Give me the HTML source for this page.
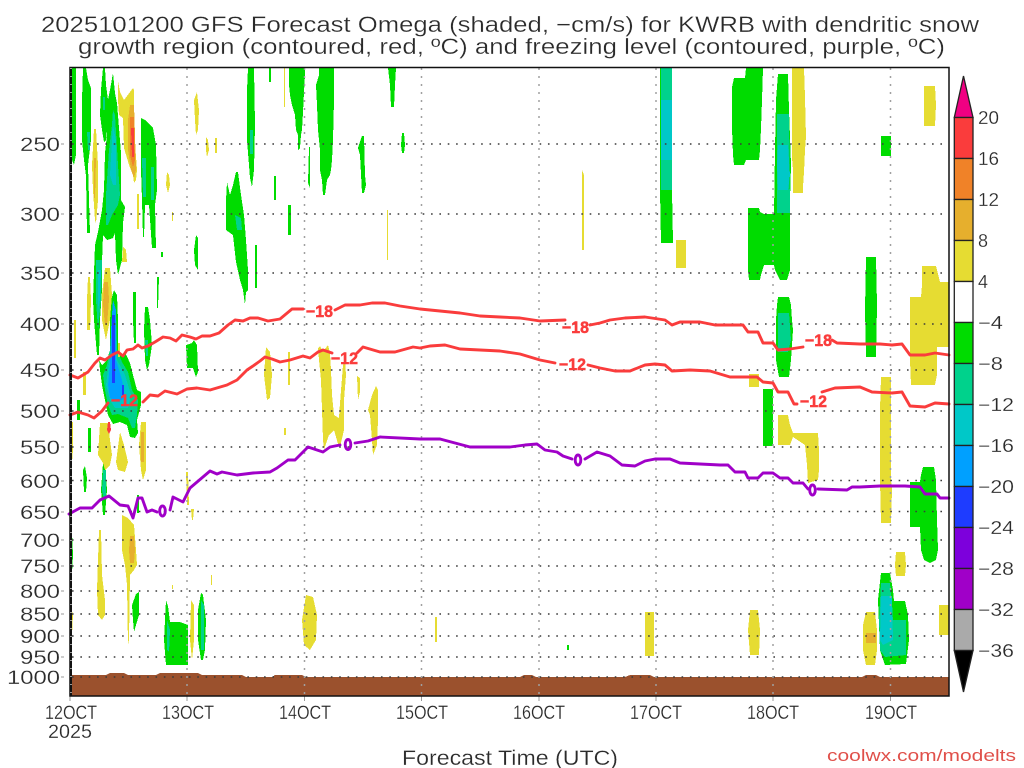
<!DOCTYPE html>
<html><head><meta charset="utf-8"><title>GFS Forecast Omega</title>
<style>html,body{margin:0;padding:0;background:#fff}svg{display:block}text{font-family:"Liberation Sans",sans-serif}</style></head>
<body>
<svg width="1024" height="768" viewBox="0 0 1024 768" xmlns="http://www.w3.org/2000/svg">
<rect width="1024" height="768" fill="#fff"/>
<g fill="#2a2a2a" stroke="#fff" stroke-width=".25">
<text x="41" y="32" font-size="22" textLength="938" lengthAdjust="spacingAndGlyphs">2025101200 GFS Forecast Omega (shaded, −cm/s) for KWRB with dendritic snow</text>
<text x="78" y="54" font-size="22" textLength="867" lengthAdjust="spacingAndGlyphs">growth region (contoured, red, ºC) and freezing level (contoured, purple, ºC)</text>
</g>
<g shape-rendering="crispEdges">
<polygon fill="#9b512d" points="70,675 106,675 110,673 124,673 128,675 156,675 160,673 198,673 202,675 242,675 246,677 272,677 275,675 302,675 306,677 520,677 524,675 532,675 536,677 625,677 630,675 650,675 654,677 862,677 866,675 876,675 880,677 949,677 949,696 70,696"/>
<g fill="#00dc00">
<polygon points="71,68 76,68 76,155 74,165 72,160 71,150"/>
<polygon points="83,68 86,68 88,80 91,88 91,140 88,165 90,233 87,233 86,176 84,160 82,140 82,100"/>
<polygon points="103,68 105,68 106,85 108,100 108,120 106,140 104,142 102,130 100,115 101,90"/>
<polygon points="113,73 115,93 117,103 121,153 121,200 125,207 123,223 122,260 118,275 116,260 115,233 113,238 107,240 103,235 102,262 102,290 100,320 99,355 97,355 94,320 93,300 95,245 98,232 102,210 104,190 105,153 107,135 108,100 110,90"/>
<polygon points="114,290 117,295 118,320 118,352 122,355 125,352 130,363 133,375 137,390 141,392 141,405 137,420 138,433 135,438 130,437 127,425 120,422 113,424 108,415 105,400 102,385 100,370 99,360 102,365 107,360 110,350 110,320 111,300"/>
<polygon points="141,118 145,120 149,124 153,128 156,145 157,190 155,205 156,248 152,248 149,205 145,205 144,237 143,237 142,200 141,170"/>
<polygon points="145,307 148,307 150,320 152,345 149,365 147,370 145,360 144,330"/>
<polygon points="133,292 136,292 136,343 134,343 133,320"/>
<polygon points="157,277 159,277 158,308 157,308"/>
<polygon points="186,345 192,343 194,340 197,345 198,372 196,377 193,368 187,368"/>
<rect x="77" y="400" width="3" height="20"/><rect x="88" y="428" width="3" height="24"/>
<polygon points="83,470 85,466 87,478 86,492 84,492"/>
<polygon points="103,463 105,463 107,490 105,515 103,515 101,490"/>
<rect x="137" y="495" width="2" height="18"/>
<polygon points="70,532 72,532 73,555 72,573 70,573"/>
<polygon points="136,594 139,592 139,615 136,625 134,632 133,620 132,605"/>
<polygon points="166,600 168,606 170,622 180,622 188,625 188,665 166,665 164,640 165,620"/>
<polygon points="201,593 203,595 206,620 205,650 203,660 201,660 198,640 198,610"/>
<polygon points="227,182 230,195 233,185 236,172 238,172 241,195 244,215 246,240 248,270 248,290 246,292 245,305 243,290 240,280 236,262 233,235 226,230 226,200"/>
<polygon points="196,235 198,238 198,270 195,265 194,250"/>
<rect x="255" y="245" width="2" height="43"/><rect x="161" y="252" width="2" height="5"/>
<polygon points="248,68 254,68 255,125 254,170 252,187 250,178 247,140 247,90"/>
<rect x="269" y="68" width="2" height="14"/>
<rect x="274" y="176" width="2" height="24"/>
<polygon points="288,205 291,205 291,235 288,235"/>
<polygon points="289,68 305,68 305,75 304,92 303,112 302,130 301,135 300,148 298,150 298,135 296,130 295,115 292,105 290,95 289,85"/>
<polygon points="309,147 310,147 310,188 308,183"/>
<polygon points="319,68 334,68 334,100 333,140 332,160 331,170 330,175 327,180 325,195 323,195 322,180 320,170 320,150 318,130 317,105 316,85 319,75"/>
<polygon points="362,136 364,136 365,175 366,185 364,193 362,193 360,155 358,148"/>
<polygon points="402,133 404,133 405,145 404,153 402,153 401,145"/>
<polygon points="388,68 396,68 395,85 394,107 391,107 390,85"/>
<rect x="567" y="645" width="2" height="5"/>
<polygon points="660,68 672,68 672,190 673,243 661,243 660,190"/>
<polygon points="746,68 763,68 762,100 761,128 760,150 759,160 746,160 744,165 734,165 733,155 732,128 732,87 734,78 745,78"/>
<polygon points="778,74 788,74 789,110 791,165 790,200 790,264 790,270 787,280 780,280 775,270 774,265 764,265 761,275 760,280 749,280 748,270 748,208 759,208 760,212 764,214 774,214 775,150 776,100"/>
<polygon points="778,297 789,297 791,305 792,320 793,330 791,360 789,377 779,377 776,360 776,320 777,305"/>
<rect x="763" y="389" width="10" height="57"/>
<rect x="881" y="136" width="10" height="20"/>
<polygon points="866,257 876,257 877,305 876,357 866,357 865,310"/>
<polygon points="923,467 934,467 936,480 937,520 938,550 936,560 930,563 924,560 921,550 920,527 910,527 910,482 920,482 921,475"/>
<polygon points="881,573 890,573 893,590 894,601 905,601 908,615 909,640 906,664 885,665 880,650 878,600"/>
</g>
<g fill="#00d28c">
<polygon points="113,110 115,115 118,165 120,195 118,205 112,215 108,225 106,225 106,195 109,150 112,125"/>
<rect x="103" y="97" width="2" height="13"/>
<polygon points="87,132 90,132 90,150 88,150"/>
<polygon points="96,260 102,260 101,300 98,330 96,300"/>
<polygon points="113,305 116,310 117,350 122,362 128,372 132,390 138,400 137,415 135,428 132,428 128,418 118,414 112,415 108,405 105,390 103,375 107,365 110,350"/>
<polygon points="142,158 146,158 146,197 143,197"/><polygon points="151,167 154,167 154,200 151,200"/>
<polygon points="235,215 241,218 242,230 237,230"/>
<polygon points="145,340 148,340 148,356 146,356"/>
<polygon points="103,470 106,470 106,495 104,500 102,490"/>
<polygon points="167,620 170,630 169,652 167,650"/><polygon points="201,600 204,605 204,650 201,650"/>
<rect x="250" y="130" width="3" height="24"/>
<polygon points="661,68 672,68 672,190 661,190"/>
<polygon points="777,114 789,114 790,213 777,213"/>
<polygon points="778,313 789,313 791,340 788,352 778,352"/>
<polygon points="881,583 890,583 893,620 906,620 906,655 885,657 880,650 879,620"/>
</g>
<g fill="#00c8c8">
<polygon points="113,125 116,140 116,185 113,185 110,175 112,140"/>
<polygon points="98,270 101,270 100,300 98,310"/>
<polygon points="112,315 116,318 117,360 125,375 131,395 128,408 115,408 110,400 106,385 108,370 111,350"/>
<rect x="661" y="100" width="11" height="60"/>
<polygon points="778,145 788,145 790,175 788,190 778,190 777,165"/>
<polygon points="881,596 892,596 893,640 883,645 880,640"/>
</g>
<g fill="#00a0ff">
<polygon points="113,300 116,310 116,360 122,380 125,398 118,402 110,398 108,385 110,365 111,330"/>
</g>
<g fill="#1e3cff">
<rect x="112" y="315" width="3" height="68"/><rect x="122" y="385" width="2" height="10"/>
</g>
<g fill="#e6dc32">
<polygon points="118,81 120,92 124,100 133,88 134,90 134,130 137,170 136,180 134,183 133,175 129,165 124,148 123,118 119,115 118,100"/>
<polygon points="94,129 96,129 98,165 98,200 96,223 95,220 93,190 92,165"/>
<polygon points="194,100 197,92 199,110 198,130 196,135 195,120"/>
<polygon points="206,137 208,140 209,150 207,157 206,150"/><rect x="215" y="138" width="2" height="15"/>
<polygon points="167,172 169,175 170,185 168,193 166,185"/>
<rect x="137" y="194" width="2" height="35"/><rect x="172" y="212" width="1" height="9"/>
<polygon points="123,247 126,250 127,262 122,262"/>
<polygon points="105,268 110,268 112,295 110,320 106,340 102,320 102,295"/>
<polygon points="88,277 90,277 91,300 90,330 87,330 87,300"/>
<rect x="74" y="320" width="2" height="38"/><rect x="83" y="372" width="3" height="23"/>
<rect x="118" y="343" width="2" height="14"/>
<polygon points="70,422 73,422 73,450 72,462 70,462"/>
<polygon points="100,423 108,423 110,440 112,455 110,465 105,470 103,463 98,455"/>
<polygon points="120,432 124,445 128,462 125,472 118,470 116,462"/>
<polygon points="141,422 146,422 146,470 143,480 141,470 139,445"/>
<polygon points="186,472 188,472 189,505 187,505"/>
<polygon points="191,509 194,509 193,520 192,520"/>
<polygon points="122,515 128,518 134,525 136,550 137,565 134,570 130,575 129,640 128,645 127,585 125,565 122,550"/>
<polygon points="99,530 101,530 102,575 105,600 105,615 102,620 98,615 97,590 98,560"/>
<polygon points="70,602 73,615 72,635 70,635"/>
<rect x="172" y="585" width="1" height="4"/><rect x="211" y="575" width="1" height="10"/>
<polygon points="191,600 194,605 194,640 192,660 190,640"/>
<polygon points="284,68 285,68 285,107 284,107"/>
<polygon points="306,595 313,597 317,615 316,640 310,650 304,645 302,620"/>
<polygon points="318,348 320,346 322,350 325,349 328,345 330,353 331,370 332,395 334,415 339,418 340,403 343,365 345,360 346,375 344,400 344,430 340,447 338,444 334,430 329,435 325,447 324,450 323,440 322,410 321,380 319,360"/>
<rect x="288" y="352" width="2" height="33"/><rect x="284" y="428" width="2" height="7"/>
<polygon points="357,376 360,378 360,392 358,400"/>
<polygon points="376,386 378,390 378,420 377,445 373,455 372,440 370,415 368,410 372,395"/>
<polygon points="266,347 270,352 272,375 270,398 267,400 264,375"/>
<rect x="435" y="617" width="2" height="25"/>
<rect x="387" y="210" width="1" height="50"/>
<polygon points="582,170 584,175 584,250 582,250"/>
<rect x="676" y="240" width="10" height="28"/>
<rect x="645" y="612" width="9" height="44"/>
<polygon points="750,610 758,610 760,630 759,655 750,655 748,630"/>
<polygon points="792,68 804,68 805,97 806,137 805,150 804,172 803,187 803,193 793,193 793,170 792,158"/>
<rect x="749" y="374" width="10" height="13"/>
<polygon points="778,415 788,415 790,425 793,433 805,433 818,433 819,450 819,470 818,480 808,483 807,465 805,445 793,437 790,445 787,445 778,445"/>
<polygon points="924,86 935,86 936,105 935,126 924,126"/>
<polygon points="922,266 936,266 940,282 949,282 949,347 937,347 937,375 935,385 911,385 910,360 910,297 921,297 922,285"/>
<polygon points="881,377 891,377 891,480 892,490 891,523 881,523 880,480 880,410"/>
<polygon points="896,552 905,552 906,565 905,576 896,576 895,565"/>
<rect x="939" y="605" width="10" height="30"/>
<polygon points="866,612 875,612 877,630 877,650 875,665 866,665 863,650 863,625"/>
</g>
<g fill="#e6af2d">
<polygon points="130,105 134,105 135,135 136,170 134,178 131,170 128,150 128,120"/>
<polygon points="94,158 96,158 95,198 94,198"/>
<polygon points="104,282 108,282 109,300 107,325 105,325 103,305"/>
<rect x="141" y="432" width="3" height="30"/>
<polygon points="130,536 134,536 135,550 134,563 130,563 129,550"/>
<rect x="866" y="633" width="10" height="10"/>
</g>
<polygon fill="#f08228" points="130,117 134,117 135,160 133,167 130,155"/>
<polygon fill="#fa3c3c" points="131,128 134,128 134,157 132,157"/>
<polygon fill="#fa3c3c" points="108,422 110,422 111,430 109,434 107,430"/>
</g>
<!-- grid -->
<g fill="none">
<g stroke="#3a3a3a" stroke-width="1.4" stroke-dasharray="1.6 6.75">
<path d="M72 144H949M72 214H949M72 273H949M72 324H949M72 370H949M72 411H949M72 447H949M72 480.500H949M72 511.500H949M72 540H949M72 566H949M72 591H949M72 614H949M72 636H949M72 657H949M72 677H949"/>
</g>
<g stroke="#a0a0a0" stroke-width="1.5" stroke-dasharray="2 6">
<path d="M187 68V696M304.500 68V696M421.500 68V696M539 68V696M656 68V696M773 68V696M890.500 68V696"/>
</g>
<g stroke="#999" stroke-width="1"><path d="M70 696V701M187 696V701M304.500 696V701M421.500 696V701M539 696V701M656 696V701M773 696V701M890.500 696V701M61 144H64M61 214H64M61 273H64M61 324H64M61 370H64M61 411H64M61 447H64M61 481H64M61 512H64M61 540H64M61 566H64M61 591H64M61 614H64M61 636H64M61 657H64M61 677H64"/></g>
<!-- contours -->
<g stroke-width="2.9" stroke-linejoin="round" stroke-linecap="round">
<path stroke="#fa3c3c" d="M70 375 78 378 88 372 95 363 100 358 105 360 112 355 118 352 123 356 127 350 133 349 138 345 142 348 148 346 155 342 163 337 170 338 176 341 182 335 190 337 196 339 202 336 210 336 219 333 228 325 235 320 243 321 250 318 258 318 268 321 280 319 292 309 303 309M335 310 345 305 360 305 372 303 385 303 400 306 420 309 440 311 460 313 480 316 500 317 520 318 540 321 565 320M590 325 600 323 610 320 625 318 645 317 665 320 672 325 680 322 700 322 715 325 730 325 743 325 748 332 758 332 763 343 773 343 778 350 790 349 803 347M832 340 837 343 860 344 880 344 892 345 902 344 910 355 925 355 935 353 949 355"/>
<path stroke="#fa3c3c" d="M70 415 78 412 88 415 94 418 102 411 108 403M143 402 150 395 158 396 165 391 177 394 187 389 197 388 210 390 227 385 237 380 247 370 253 366 260 361 265 357 272 359 280 362 290 360 303 356 310 358 318 352 323 350 332 353M357 353 363 347 380 352 395 352 413 347 420 348 430 346 445 345 460 349 480 350 500 351 520 354 540 360 555 363M588 365 600 368 615 371 630 371 645 365 655 364 665 365 672 371 690 370 710 371 720 374 730 377 757 377 763 382 773 383 778 392 788 392 794 404 797 404M822 392 835 388 860 387 872 392 892 393 902 392 910 406 925 407 935 403 949 404"/>
<path stroke="#a000c8" d="M69 514 80 508 92 508 100 500 109 496 120 505 128 506 133 518 138 498 142 498 147 512 152 510 157 512M170 510 173 497 183 502 190 488 210 471 217 474 222 472 237 475 253 473 270 472 277 468 288 460 295 460 308 447 323 452 330 447 340 445M355 443 368 441 380 437 420 439 440 439 455 443 470 447 490 447 510 447 525 445 537 444 545 450 557 452 563 456 572 459M585 459 597 452 610 456 622 465 635 466 645 461 655 459 670 459 680 463 700 464 720 465 728 465 735 472 745 472 748 478 758 478 763 473 773 473 780 478 788 478 793 483 803 483 808 489M818 489 847 490 852 487 860 487 880 486 905 486 920 487 925 494 937 494 940 498 949 498"/>
<ellipse stroke="#a000c8" cx="162.500" cy="511" rx="2.800" ry="5"/>
<ellipse stroke="#a000c8" cx="348" cy="444.500" rx="2.800" ry="5"/>
<ellipse stroke="#a000c8" cx="578" cy="460" rx="2.800" ry="5"/>
<ellipse stroke="#a000c8" cx="812.500" cy="490" rx="2.800" ry="5"/>
</g>
</g>
<g fill="#fa3c3c" stroke="#fa3c3c" stroke-width=".5" font-size="17" font-weight="bold">
<text x="306" y="317" textLength="27" lengthAdjust="spacingAndGlyphs">−18</text>
<text x="562" y="333" textLength="27" lengthAdjust="spacingAndGlyphs">−18</text>
<text x="805" y="346" textLength="27" lengthAdjust="spacingAndGlyphs">−18</text>
<text x="111" y="406" textLength="27" lengthAdjust="spacingAndGlyphs">−12</text>
<text x="331" y="364" textLength="27" lengthAdjust="spacingAndGlyphs">−12</text>
<text x="559" y="370" textLength="27" lengthAdjust="spacingAndGlyphs">−12</text>
<text x="800" y="407" textLength="27" lengthAdjust="spacingAndGlyphs">−12</text>
</g>
<!-- frame -->
<rect x="70" y="67.500" width="879" height="628.500" fill="none" stroke="#111" stroke-width="1.500"/>
<path d="M71 68V696" stroke="#111" stroke-width="2" fill="none"/>
<path d="M71 68V696" stroke="#999" stroke-width="2" stroke-dasharray="1 7" fill="none"/>
<!-- colorbar -->
<g stroke="#222" stroke-width="1.300">
<polygon points="963.500,76 973,117.500 954.300,117.500" fill="#f00082"/>
<rect x="954.300" y="117.500" width="18.700" height="41" fill="#fa3c3c"/>
<rect x="954.300" y="158.500" width="18.700" height="41" fill="#f08228"/>
<rect x="954.300" y="199.500" width="18.700" height="41" fill="#e6af2d"/>
<rect x="954.300" y="240.500" width="18.700" height="41" fill="#e6dc32"/>
<rect x="954.300" y="281.500" width="18.700" height="41" fill="#fff"/>
<rect x="954.300" y="322.500" width="18.700" height="41" fill="#00dc00"/>
<rect x="954.300" y="363.500" width="18.700" height="41" fill="#00d28c"/>
<rect x="954.300" y="404.500" width="18.700" height="41" fill="#00c8c8"/>
<rect x="954.300" y="445.500" width="18.700" height="41" fill="#00a0ff"/>
<rect x="954.300" y="486.500" width="18.700" height="41" fill="#1e3cff"/>
<rect x="954.300" y="527.500" width="18.700" height="41" fill="#7d00dc"/>
<rect x="954.300" y="568.500" width="18.700" height="41" fill="#a000c8"/>
<rect x="954.300" y="609.500" width="18.700" height="41" fill="#aaa"/>
<polygon points="954.300,650.500 973,650.500 963.500,692" fill="#000"/>
</g>
<g fill="#2a2a2a" stroke="#fff" stroke-width=".2" font-size="18">
<text x="978" y="124" textLength="21" lengthAdjust="spacingAndGlyphs">20</text>
<text x="978" y="165" textLength="21" lengthAdjust="spacingAndGlyphs">16</text>
<text x="978" y="206" textLength="21" lengthAdjust="spacingAndGlyphs">12</text>
<text x="978" y="247">8</text>
<text x="978" y="288">4</text>
<text x="978" y="329" textLength="25" lengthAdjust="spacingAndGlyphs">−4</text>
<text x="978" y="370" textLength="25" lengthAdjust="spacingAndGlyphs">−8</text>
<text x="978" y="411" textLength="36" lengthAdjust="spacingAndGlyphs">−12</text>
<text x="978" y="452" textLength="36" lengthAdjust="spacingAndGlyphs">−16</text>
<text x="978" y="493" textLength="36" lengthAdjust="spacingAndGlyphs">−20</text>
<text x="978" y="534" textLength="36" lengthAdjust="spacingAndGlyphs">−24</text>
<text x="978" y="575" textLength="36" lengthAdjust="spacingAndGlyphs">−28</text>
<text x="978" y="616" textLength="36" lengthAdjust="spacingAndGlyphs">−32</text>
<text x="978" y="657" textLength="36" lengthAdjust="spacingAndGlyphs">−36</text>
</g>
<g fill="#2a2a2a" stroke="#fff" stroke-width=".2" font-size="19">
<text x="20" y="151" textLength="40" lengthAdjust="spacingAndGlyphs">250</text>
<text x="20" y="221" textLength="40" lengthAdjust="spacingAndGlyphs">300</text>
<text x="20" y="280" textLength="40" lengthAdjust="spacingAndGlyphs">350</text>
<text x="20" y="331" textLength="40" lengthAdjust="spacingAndGlyphs">400</text>
<text x="20" y="377" textLength="40" lengthAdjust="spacingAndGlyphs">450</text>
<text x="20" y="418" textLength="40" lengthAdjust="spacingAndGlyphs">500</text>
<text x="20" y="454" textLength="40" lengthAdjust="spacingAndGlyphs">550</text>
<text x="20" y="488" textLength="40" lengthAdjust="spacingAndGlyphs">600</text>
<text x="20" y="519" textLength="40" lengthAdjust="spacingAndGlyphs">650</text>
<text x="20" y="547" textLength="40" lengthAdjust="spacingAndGlyphs">700</text>
<text x="20" y="573" textLength="40" lengthAdjust="spacingAndGlyphs">750</text>
<text x="20" y="598" textLength="40" lengthAdjust="spacingAndGlyphs">800</text>
<text x="20" y="621" textLength="40" lengthAdjust="spacingAndGlyphs">850</text>
<text x="20" y="643" textLength="40" lengthAdjust="spacingAndGlyphs">900</text>
<text x="20" y="664" textLength="40" lengthAdjust="spacingAndGlyphs">950</text>
<text x="7" y="684" textLength="53" lengthAdjust="spacingAndGlyphs">1000</text>
<text x="45" y="719" textLength="52" lengthAdjust="spacingAndGlyphs">12OCT</text>
<text x="162" y="719" textLength="52" lengthAdjust="spacingAndGlyphs">13OCT</text>
<text x="279" y="719" textLength="52" lengthAdjust="spacingAndGlyphs">14OCT</text>
<text x="396" y="719" textLength="52" lengthAdjust="spacingAndGlyphs">15OCT</text>
<text x="513" y="719" textLength="52" lengthAdjust="spacingAndGlyphs">16OCT</text>
<text x="630" y="719" textLength="52" lengthAdjust="spacingAndGlyphs">17OCT</text>
<text x="747" y="719" textLength="52" lengthAdjust="spacingAndGlyphs">18OCT</text>
<text x="865" y="719" textLength="52" lengthAdjust="spacingAndGlyphs">19OCT</text>
<text x="48" y="738" textLength="44" lengthAdjust="spacingAndGlyphs">2025</text>
<text x="402" y="765" font-size="21" textLength="216" lengthAdjust="spacingAndGlyphs">Forecast Time (UTC)</text>
</g>
<text x="827" y="761" font-size="17" fill="#e0504a" textLength="189" lengthAdjust="spacingAndGlyphs">coolwx.com/modelts</text>
</svg>
</body></html>
